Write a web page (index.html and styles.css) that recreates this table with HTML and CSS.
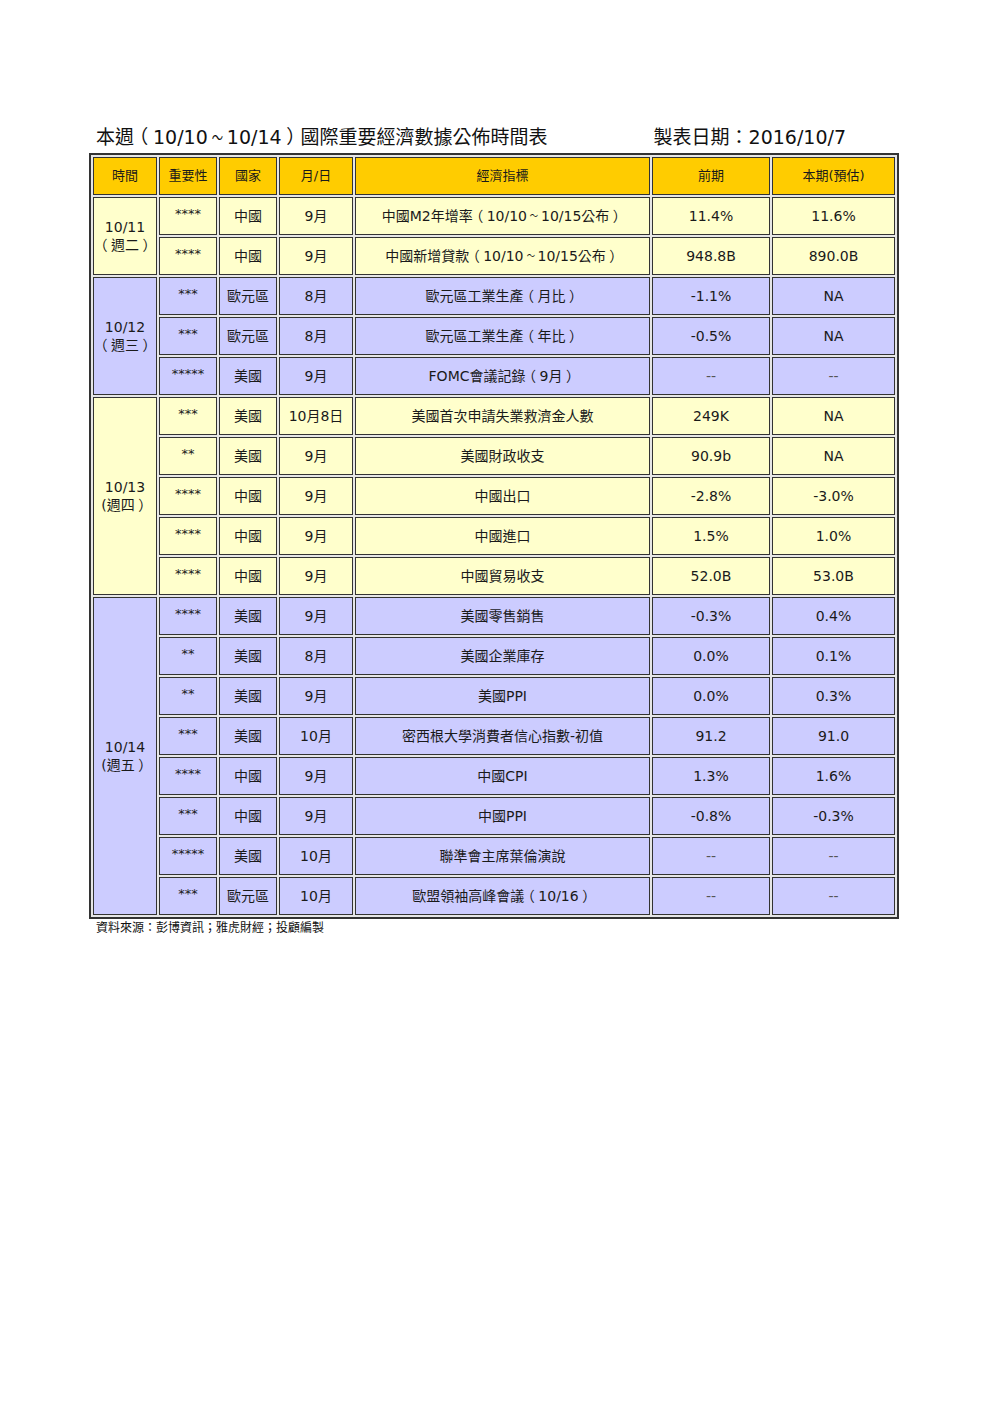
FILE: index.html
```html
<!DOCTYPE html>
<html lang="zh-Hant">
<head>
<meta charset="utf-8">
<title>國際重要經濟數據公佈時間表</title>
<link rel="stylesheet" href="styles.css">
</head>
<body>
<div class="page">
  <div class="title-row">
    <div class="title">本週<span class="op">（</span>10/10<span class="tl">～</span>10/14<span class="cp">）</span>國際重要經濟數據公佈時間表</div>
    <div class="date">製表日期：2016/10/7</div>
  </div>
  <table class="sched">
    <colgroup>
      <col class="c1"><col class="c2"><col class="c3"><col class="c4"><col class="c5"><col class="c6"><col class="c7">
    </colgroup>
    <thead>
      <tr><th>時間</th><th>重要性</th><th>國家</th><th>月/日</th><th>經濟指標</th><th>前期</th><th>本期(預估)</th></tr>
    </thead>
    <tbody class="yel">
      <tr><td rowspan="2" class="day">10/11<br><span class="op">（</span>週二<span class="cp">）</span></td><td class="star">****</td><td>中國</td><td>9月</td><td>中國M2年增率<span class="op">（</span>10/10<span class="tl">～</span>10/15公布<span class="cp">）</span></td><td>11.4%</td><td>11.6%</td></tr>
      <tr><td class="star">****</td><td>中國</td><td>9月</td><td>中國新增貸款<span class="op">（</span>10/10<span class="tl">～</span>10/15公布<span class="cp">）</span></td><td>948.8B</td><td>890.0B</td></tr>
    </tbody>
    <tbody class="lav">
      <tr><td rowspan="3" class="day">10/12<br><span class="op">（</span>週三<span class="cp">）</span></td><td class="star">***</td><td>歐元區</td><td>8月</td><td>歐元區工業生產<span class="op">（</span>月比<span class="cp">）</span></td><td>-1.1%</td><td>NA</td></tr>
      <tr><td class="star">***</td><td>歐元區</td><td>8月</td><td>歐元區工業生產<span class="op">（</span>年比<span class="cp">）</span></td><td>-0.5%</td><td>NA</td></tr>
      <tr><td class="star">*****</td><td>美國</td><td>9月</td><td>FOMC會議記錄<span class="op">（</span>9月<span class="cp">）</span></td><td class="dash">--</td><td class="dash">--</td></tr>
    </tbody>
    <tbody class="yel">
      <tr><td rowspan="5" class="day">10/13<br>(週四<span class="cp">）</span></td><td class="star">***</td><td>美國</td><td>10月8日</td><td>美國首次申請失業救濟金人數</td><td>249K</td><td>NA</td></tr>
      <tr><td class="star">**</td><td>美國</td><td>9月</td><td>美國財政收支</td><td>90.9b</td><td>NA</td></tr>
      <tr><td class="star">****</td><td>中國</td><td>9月</td><td>中國出口</td><td>-2.8%</td><td>-3.0%</td></tr>
      <tr><td class="star">****</td><td>中國</td><td>9月</td><td>中國進口</td><td>1.5%</td><td>1.0%</td></tr>
      <tr><td class="star">****</td><td>中國</td><td>9月</td><td>中國貿易收支</td><td>52.0B</td><td>53.0B</td></tr>
    </tbody>
    <tbody class="lav">
      <tr><td rowspan="8" class="day">10/14<br>(週五<span class="cp">）</span></td><td class="star">****</td><td>美國</td><td>9月</td><td>美國零售銷售</td><td>-0.3%</td><td>0.4%</td></tr>
      <tr><td class="star">**</td><td>美國</td><td>8月</td><td>美國企業庫存</td><td>0.0%</td><td>0.1%</td></tr>
      <tr><td class="star">**</td><td>美國</td><td>9月</td><td>美國PPI</td><td>0.0%</td><td>0.3%</td></tr>
      <tr><td class="star">***</td><td>美國</td><td>10月</td><td>密西根大學消費者信心指數-初值</td><td>91.2</td><td>91.0</td></tr>
      <tr><td class="star">****</td><td>中國</td><td>9月</td><td>中國CPI</td><td>1.3%</td><td>1.6%</td></tr>
      <tr><td class="star">***</td><td>中國</td><td>9月</td><td>中國PPI</td><td>-0.8%</td><td>-0.3%</td></tr>
      <tr><td class="star">*****</td><td>美國</td><td>10月</td><td>聯準會主席葉倫演說</td><td class="dash">--</td><td class="dash">--</td></tr>
      <tr><td class="star">***</td><td>歐元區</td><td>10月</td><td>歐盟領袖高峰會議<span class="op">（</span>10/16<span class="cp">）</span></td><td class="dash">--</td><td class="dash">--</td></tr>
    </tbody>
  </table>
  <div class="source">資料來源：彭博資訊；雅虎財經；投顧編製</div>
</div>
</body>
</html>
```
FILE: styles.css
```css
html, body {
  margin: 0;
  padding: 0;
  background: #ffffff;
}
body {
  font-family: "DejaVu Sans", "Noto Sans CJK TC", sans-serif;
  color: #1a1a1a;
}
.page {
  padding: 125px 0 0 89px;
  width: 810px;
}
.title-row {
  display: flex;
  justify-content: space-between;
  align-items: center;
  height: 24px;
  font-size: 19px;
  line-height: 24px;
  padding: 0 53px 0 7px;
  margin-bottom: 4px;
  color: #111;
}
.op, .cp {
  font-family: "Noto Sans CJK TC", sans-serif;
  font-feature-settings: "halt" 1;
  padding: 0 0.25em;
  line-height: 1;
}
.tl {
  display: inline-block;
  transform: scale(0.6, 0.8);
  line-height: 1;
}
.sched {
  width: 810px;
  table-layout: fixed;
  border-collapse: separate;
  border-spacing: 2px;
  border: 2px solid #333;
  background: #e6e6e6;
  font-size: 14px;
}
.c1 { width: 64px; }
.c2 { width: 58px; }
.c3 { width: 58px; }
.c4 { width: 74px; }
.c5 { width: 295px; }
.c6 { width: 118px; }
.c7 { width: 123px; }
.sched th, .sched td {
  box-sizing: border-box;
  height: 38px;
  border: 1px solid #333;
  padding: 0;
  text-align: center;
  vertical-align: middle;
  font-weight: normal;
  white-space: nowrap;
  line-height: 18px;
}
.sched th {
  background: #ffcc00;
  font-size: 13px;
}
.yel td { background: #ffffcc; }
.lav td { background: #ccccff; }
.sched td.star {
  font-size: 13px;
  padding-bottom: 4px;
}
.dash { color: #555; }
.day {
  font-size: 14px;
  line-height: 18px;
}
.source {
  font-size: 12px;
  line-height: 16px;
  padding-left: 7px;
  margin-top: 1px;
  color: #111;
}
```
